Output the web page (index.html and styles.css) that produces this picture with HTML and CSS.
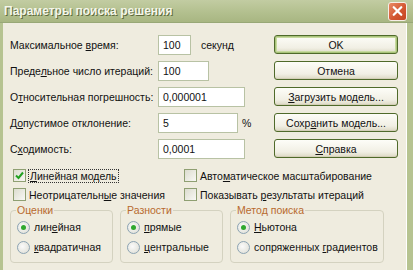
FILE: index.html
```html
<!DOCTYPE html>
<html>
<head>
<meta charset="utf-8">
<link rel="stylesheet" href="styles.css">
</head>
<body>
<div class="window">
  <div class="titlebar">
    <span class="title">Параметры поиска решения</span>
    <span class="close"><svg width="18" height="18" viewBox="0 0 18 18"><path d="M5 5 L13 13 M13 5 L5 13" stroke="#fff" stroke-width="2.4" stroke-linecap="round"/></svg></span>
  </div>
  <div class="frame">
    <div class="content">
      <div class="top">
        <div class="form">
          <label>Максимальное <u>в</u>ремя:</label>
          <div class="field"><span class="input w32">100</span><span class="unit">секунд</span></div>
          <label>Преде<u>л</u>ьное число итераций:</label>
          <div class="field"><span class="input w50">100</span></div>
          <label>О<u>т</u>носительная погрешность:</label>
          <div class="field"><span class="input w86">0,000001</span></div>
          <label>Д<u>о</u>пустимое отклонение:</label>
          <div class="field"><span class="input w79">5</span><span class="unit pct">%</span></div>
          <label>С<u>х</u>одимость:</label>
          <div class="field"><span class="input w86">0,0001</span></div>
        </div>
        <div class="buttons">
          <button class="btn default">OK</button>
          <button class="btn">Отмена</button>
          <button class="btn"><u>З</u>агрузить модель...</button>
          <button class="btn">Сохр<u>а</u>нить модель...</button>
          <button class="btn"><u>С</u>правка</button>
        </div>
      </div>
      <div class="checks">
        <div class="check"><span class="box checked"><svg width="9" height="9" viewBox="0 0 9 9"><path d="M1 4.5 L3.5 7 L8 1.5" fill="none" stroke="#21a121" stroke-width="2"/></svg></span><span class="focus"><u>Л</u>инейная модель</span></div>
        <div class="check"><span class="box"></span><span>Авто<u>м</u>атическое масштабирование</span></div>
        <div class="check"><span class="box"></span><span>Неотрицательн<u>ы</u>е значения</span></div>
        <div class="check"><span class="box"></span><span>Показывать <u>р</u>езультаты итераций</span></div>
      </div>
      <div class="groups">
        <fieldset class="g1">
          <legend>Оценки</legend>
          <div class="radio"><span class="dot on"></span><span>лин<u>е</u>йная</span></div>
          <div class="radio"><span class="dot"></span><span><u>к</u>вадратичная</span></div>
        </fieldset>
        <fieldset class="g2">
          <legend>Разности</legend>
          <div class="radio"><span class="dot on"></span><span><u>п</u>рямые</span></div>
          <div class="radio"><span class="dot"></span><span><u>ц</u>ентральные</span></div>
        </fieldset>
        <fieldset class="g3">
          <legend>Метод поиска</legend>
          <div class="radio"><span class="dot on"></span><span><u>Н</u>ьютона</span></div>
          <div class="radio"><span class="dot"></span><span>сопряженных <u>г</u>радиентов</span></div>
        </fieldset>
      </div>
    </div>
  </div>
</div>
</body>
</html>
```
FILE: styles.css
```css
* { box-sizing: border-box; }
html, body { margin: 0; padding: 0; }
body {
  width: 413px;
  height: 270px;
  overflow: hidden;
  background: #efecdf;
  font-family: "Liberation Sans", Arial, sans-serif;
  font-size: 10.5px;
  color: #111;
  white-space: nowrap;
}
.window {
  width: 413px;
  height: 270px;
  display: flex;
  flex-direction: column;
}
.titlebar {
  height: 23px;
  flex: none;
  display: flex;
  align-items: center;
  justify-content: space-between;
  padding: 0 6px 0 4px;
  background: linear-gradient(#c2cca2, #b3c08f 55%, #a8b682);
  border-bottom: 1px solid #98a877;
}
.title {
  font-family: "Liberation Sans", Arial, sans-serif;
  font-weight: bold;
  font-size: 12px;
  color: #f4f6ea;
  text-shadow: 1px 1px 0 #5e6b3d;
}
.close {
  width: 19px;
  height: 19px;
  border: 1px solid #f5eee6;
  border-radius: 3px;
  background: linear-gradient(135deg, #e98a64, #d2542f 60%, #c44523);
  display: flex;
  align-items: center;
  justify-content: center;
}
.frame {
  flex: 1;
  display: flex;
  border-left: 3px solid #b6c391;
  border-right: 6px solid #b6c391;
}
.content {
  flex: 1;
  background: #efecdf;
  border-right: 1px solid #fff;
  padding: 12px 0 0 7px;
  display: flex;
  flex-direction: column;
}
.top {
  display: flex;
}
.form {
  display: grid;
  grid-template-columns: 148px 116px;
  grid-auto-rows: 26px;
  width: 264px;
}
.form label {
  line-height: 20px;
}
u { text-decoration: underline; text-underline-offset: 1px; }
.field {
  display: flex;
  align-items: flex-start;
}
.input {
  height: 20px;
  line-height: 18px;
  background: #fff;
  border: 1px solid #b8c2a4;
  padding: 0 4px;
}
.w32 { width: 33px; }
.w50 { width: 51px; }
.w86 { width: 87px; }
.w79 { width: 80px; }
.unit { line-height: 20px; margin-left: 10px; }
.unit.pct { margin-left: 4px; }
.buttons {
  display: flex;
  flex-direction: column;
  gap: 7px;
}
.btn {
  width: 124px;
  height: 19px;
  font-family: "Liberation Sans", Arial, sans-serif;
  font-size: 10.5px;
  color: #111;
  padding: 0;
  border: 1px solid #4f6a2a;
  border-radius: 3px;
  background: linear-gradient(#fdfdf8, #f1efe4 70%, #dcd8c4);
  box-shadow: inset 0 -1px 0 #d4cfb8;
}
.btn.default {
  box-shadow: inset 0 0 0 1px #a9c37a, inset 0 0 0 2px #c8da9f;
}
.checks {
  display: grid;
  grid-template-columns: 171px auto;
  grid-auto-rows: 19px;
  margin-top: 1px;
  padding-left: 3px;
}
.check {
  display: flex;
  align-items: center;
  gap: 3px;
}
.box {
  width: 13px;
  height: 13px;
  border: 1px solid #8f9f72;
  background: linear-gradient(135deg, #dcdccf, #f8f8f4);
  display: flex;
  align-items: center;
  justify-content: center;
}
.focus {
  outline: 1px dotted #333;
  padding: 0 1px;
}
.groups {
  display: flex;
  gap: 7px;
  margin-top: 0;
  padding-left: 0;
}
fieldset {
  margin: 0;
  border: 1px solid #d4d2c0;
  border-radius: 4px;
  padding: 1px 0 4px 6px;
  height: 59px;
}
legend {
  color: #b86a2e;
  padding: 0 1px;
  margin-left: -1px;
  line-height: 12px;
}
.g1 { width: 103px; }
.g2 { width: 103px; }
.g3 { width: 154px; }
.radio {
  display: flex;
  align-items: center;
  gap: 4px;
  height: 20px;
}
.dot {
  width: 13px;
  height: 13px;
  border-radius: 50%;
  border: 1px solid #8ca3b3;
  background: radial-gradient(circle at 40% 40%, #fafafa, #dcdcd2);
  display: flex;
  align-items: center;
  justify-content: center;
}
.dot.on::after {
  content: "";
  width: 5px;
  height: 5px;
  border-radius: 50%;
  background: #2fa82f;
}
```
